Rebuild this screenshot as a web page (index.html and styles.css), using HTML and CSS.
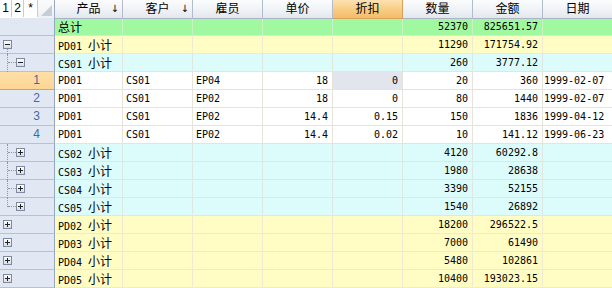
FILE: index.html
```html
<!DOCTYPE html>
<html>
<head>
<meta charset="utf-8">
<link rel="stylesheet" href="styles.css">
</head>
<body>
<div class="grid">
  <div class="row head">
    <div class="corner"><span class="lv">1</span><span class="lv">2</span><span class="lv lv3">*</span><span class="tri"></span></div>
    <div class="hc"><span class="c">产品</span><span class="arr">↓</span></div>
    <div class="hc"><span class="c">客户</span><span class="arr">↓</span></div>
    <div class="hc"><span class="c">雇员</span></div>
    <div class="hc"><span class="c">单价</span></div>
    <div class="hc sel"><span class="c">折扣</span></div>
    <div class="hc"><span class="c">数量</span></div>
    <div class="hc"><span class="c">金额</span></div>
    <div class="hc last"><span class="c">日期</span></div>
  </div>

  <div class="row total">
    <div class="rh"></div>
    <div class="cell"><span class="c">总计</span></div>
    <div class="cell"></div><div class="cell"></div><div class="cell"></div><div class="cell"></div>
    <div class="cell num">52370</div><div class="cell num">825651.57</div><div class="cell"></div>
  </div>

  <div class="row pd">
    <div class="rh"><span class="box l0 minus"></span><span class="vline start"></span></div>
    <div class="cell">PD01 <span class="c">小计</span></div>
    <div class="cell"></div><div class="cell"></div><div class="cell"></div><div class="cell"></div>
    <div class="cell num">11290</div><div class="cell num">171754.92</div><div class="cell"></div>
  </div>

  <div class="row cs">
    <div class="rh"><span class="vline"></span><span class="hline"></span><span class="box l1 minus"></span></div>
    <div class="cell">CS01 <span class="c">小计</span></div>
    <div class="cell"></div><div class="cell"></div><div class="cell"></div><div class="cell"></div>
    <div class="cell num">260</div><div class="cell num">3777.12</div><div class="cell"></div>
  </div>

  <div class="row data">
    <div class="rh rn cur">1</div>
    <div class="cell">PD01</div><div class="cell">CS01</div><div class="cell">EP04</div>
    <div class="cell num">18</div><div class="cell num focus">0</div>
    <div class="cell num">20</div><div class="cell num">360</div><div class="cell date">1999-02-07</div>
  </div>
  <div class="row data">
    <div class="rh rn">2</div>
    <div class="cell">PD01</div><div class="cell">CS01</div><div class="cell">EP02</div>
    <div class="cell num">18</div><div class="cell num">0</div>
    <div class="cell num">80</div><div class="cell num">1440</div><div class="cell date">1999-02-07</div>
  </div>
  <div class="row data">
    <div class="rh rn">3</div>
    <div class="cell">PD01</div><div class="cell">CS01</div><div class="cell">EP02</div>
    <div class="cell num">14.4</div><div class="cell num">0.15</div>
    <div class="cell num">150</div><div class="cell num">1836</div><div class="cell date">1999-04-12</div>
  </div>
  <div class="row data">
    <div class="rh rn">4</div>
    <div class="cell">PD01</div><div class="cell">CS01</div><div class="cell">EP02</div>
    <div class="cell num">14.4</div><div class="cell num">0.02</div>
    <div class="cell num">10</div><div class="cell num">141.12</div><div class="cell date">1999-06-23</div>
  </div>

  <div class="row cs">
    <div class="rh"><span class="vline"></span><span class="hline"></span><span class="box l1 plus"></span></div>
    <div class="cell">CS02 <span class="c">小计</span></div>
    <div class="cell"></div><div class="cell"></div><div class="cell"></div><div class="cell"></div>
    <div class="cell num">4120</div><div class="cell num">60292.8</div><div class="cell"></div>
  </div>
  <div class="row cs">
    <div class="rh"><span class="vline"></span><span class="hline"></span><span class="box l1 plus"></span></div>
    <div class="cell">CS03 <span class="c">小计</span></div>
    <div class="cell"></div><div class="cell"></div><div class="cell"></div><div class="cell"></div>
    <div class="cell num">1980</div><div class="cell num">28638</div><div class="cell"></div>
  </div>
  <div class="row cs">
    <div class="rh"><span class="vline"></span><span class="hline"></span><span class="box l1 plus"></span></div>
    <div class="cell">CS04 <span class="c">小计</span></div>
    <div class="cell"></div><div class="cell"></div><div class="cell"></div><div class="cell"></div>
    <div class="cell num">3390</div><div class="cell num">52155</div><div class="cell"></div>
  </div>
  <div class="row cs">
    <div class="rh"><span class="vline end"></span><span class="hline"></span><span class="box l1 plus"></span></div>
    <div class="cell">CS05 <span class="c">小计</span></div>
    <div class="cell"></div><div class="cell"></div><div class="cell"></div><div class="cell"></div>
    <div class="cell num">1540</div><div class="cell num">26892</div><div class="cell"></div>
  </div>

  <div class="row pd">
    <div class="rh"><span class="box l0 plus"></span></div>
    <div class="cell">PD02 <span class="c">小计</span></div>
    <div class="cell"></div><div class="cell"></div><div class="cell"></div><div class="cell"></div>
    <div class="cell num">18200</div><div class="cell num">296522.5</div><div class="cell"></div>
  </div>
  <div class="row pd">
    <div class="rh"><span class="box l0 plus"></span></div>
    <div class="cell">PD03 <span class="c">小计</span></div>
    <div class="cell"></div><div class="cell"></div><div class="cell"></div><div class="cell"></div>
    <div class="cell num">7000</div><div class="cell num">61490</div><div class="cell"></div>
  </div>
  <div class="row pd">
    <div class="rh"><span class="box l0 plus"></span></div>
    <div class="cell">PD04 <span class="c">小计</span></div>
    <div class="cell"></div><div class="cell"></div><div class="cell"></div><div class="cell"></div>
    <div class="cell num">5480</div><div class="cell num">102861</div><div class="cell"></div>
  </div>
  <div class="row pd">
    <div class="rh"><span class="box l0 plus"></span></div>
    <div class="cell">PD05 <span class="c">小计</span></div>
    <div class="cell"></div><div class="cell"></div><div class="cell"></div><div class="cell"></div>
    <div class="cell num">10400</div><div class="cell num">193023.15</div><div class="cell"></div>
  </div>
</div>
</body>
</html>
```

FILE: styles.css
```css
* { box-sizing: border-box; }
html, body { margin: 0; padding: 0; background: #fff; }
body {
  width: 612px;
  height: 288px;
  overflow: hidden;
  font-family: "DejaVu Sans Mono", "Liberation Mono", "Noto Sans CJK SC", monospace;
  font-size: 10px;
  color: #000;
}
.grid { display: flex; flex-direction: column; }
.row {
  display: grid;
  grid-template-columns: 55px 68px 70px 70px 70px 70px 70px 70px 69px;
  height: 18px;
}
.c {
  font-family: "Noto Sans CJK SC", sans-serif;
  font-size: 12px;
}
.cell {
  border-right: 1px solid #e6e3d9;
  border-bottom: 1px solid #e6e3d9;
  line-height: 17px;
  padding: 0 3px;
  white-space: nowrap;
  overflow: hidden;
}
.cell.num { text-align: right; padding-right: 4px; }
.cell.date { padding: 0 1px; }
.cell:last-child { border-right: none; }

/* header */
.head .hc {
  background: linear-gradient(#fbfcfd, #f1f3f6 50%, #e3e7ed);
  border-right: 1px solid #b2bccb;
  border-bottom: 1px solid #a9b4c5;
  text-align: center;
  line-height: 16px;
  position: relative;
}
.head .hc .c { font-size: 12px; }
.head .hc.last { border-right: none; }
.head .hc.sel {
  background: linear-gradient(#fde2b3, #f9cd86 50%, #f4bd6a);
  border-right-color: #d8a25a;
  border-bottom-color: #d8a25a;
}
.arr {
  position: absolute;
  right: 3px;
  top: 0;
  font-family: "DejaVu Sans", sans-serif;
  font-size: 10px;
  line-height: 17px;
}
.corner {
  display: flex;
  background: #fff;
  border-right: 1px solid #9aa8bf;
  border-bottom: 1px solid #a9b4c5;
}
.lv {
  width: 12px;
  height: 17px;
  border-right: 1px solid #c4ccd8;
  text-align: center;
  font-family: "Liberation Sans", sans-serif;
  font-size: 12px;
  line-height: 17px;
}
.lv3 { width: 14px; }
.tri {
  flex: 1;
  position: relative;
  background: linear-gradient(#fafbfc, #eef1f5);
}
.tri::after {
  content: "";
  position: absolute;
  right: 2px;
  bottom: 2px;
  width: 0;
  height: 0;
  border-left: 11px solid transparent;
  border-bottom: 11px solid #c8cdd4;
}

/* row header */
.rh {
  background: #e1e8f4;
  border-right: 1px solid #96a6bf;
  border-bottom: 1px solid #b4c1d6;
  position: relative;
}
.rn {
  text-align: right;
  padding-right: 14px;
  color: #3d6c9e;
  font-family: "Liberation Sans", sans-serif;
  font-size: 12px;
  line-height: 17px;
}
.rn.cur {
  background: linear-gradient(#fedfa8, #fcd594);
  border-bottom-color: #d6a462;
}

.box {
  position: absolute;
  top: 4px;
  width: 9px;
  height: 9px;
  border: 1px solid #7d8aa0;
  background: linear-gradient(#ffffff, #d9dde3);
  z-index: 2;
}
.box.l0 { left: 3px; }
.box.l1 { left: 16px; }
.box::before {
  content: "";
  position: absolute;
  left: 1px;
  top: 3px;
  width: 5px;
  height: 1px;
  background: #222;
}
.box.plus::after {
  content: "";
  position: absolute;
  left: 3px;
  top: 1px;
  width: 1px;
  height: 5px;
  background: #222;
}
.vline {
  position: absolute;
  left: 7px;
  top: 0;
  bottom: -1px;
  border-left: 1px dotted #8c96a6;
}
.vline.start { top: 13px; }
.vline.end { bottom: 8px; }
.hline {
  position: absolute;
  left: 8px;
  top: 8px;
  width: 8px;
  border-top: 1px dotted #8c96a6;
}

/* row colours */
.total .cell { background: #a0f9a0; border-color: #c9f2c2; }
.pd .cell { background: #fffdc4; border-color: #efead0; }
.cs .cell { background: #dcfcfc; border-color: #dde8e2; }
.data .cell { background: #fff; }
.data .cell.focus { background: #e3e5ee; }
```
